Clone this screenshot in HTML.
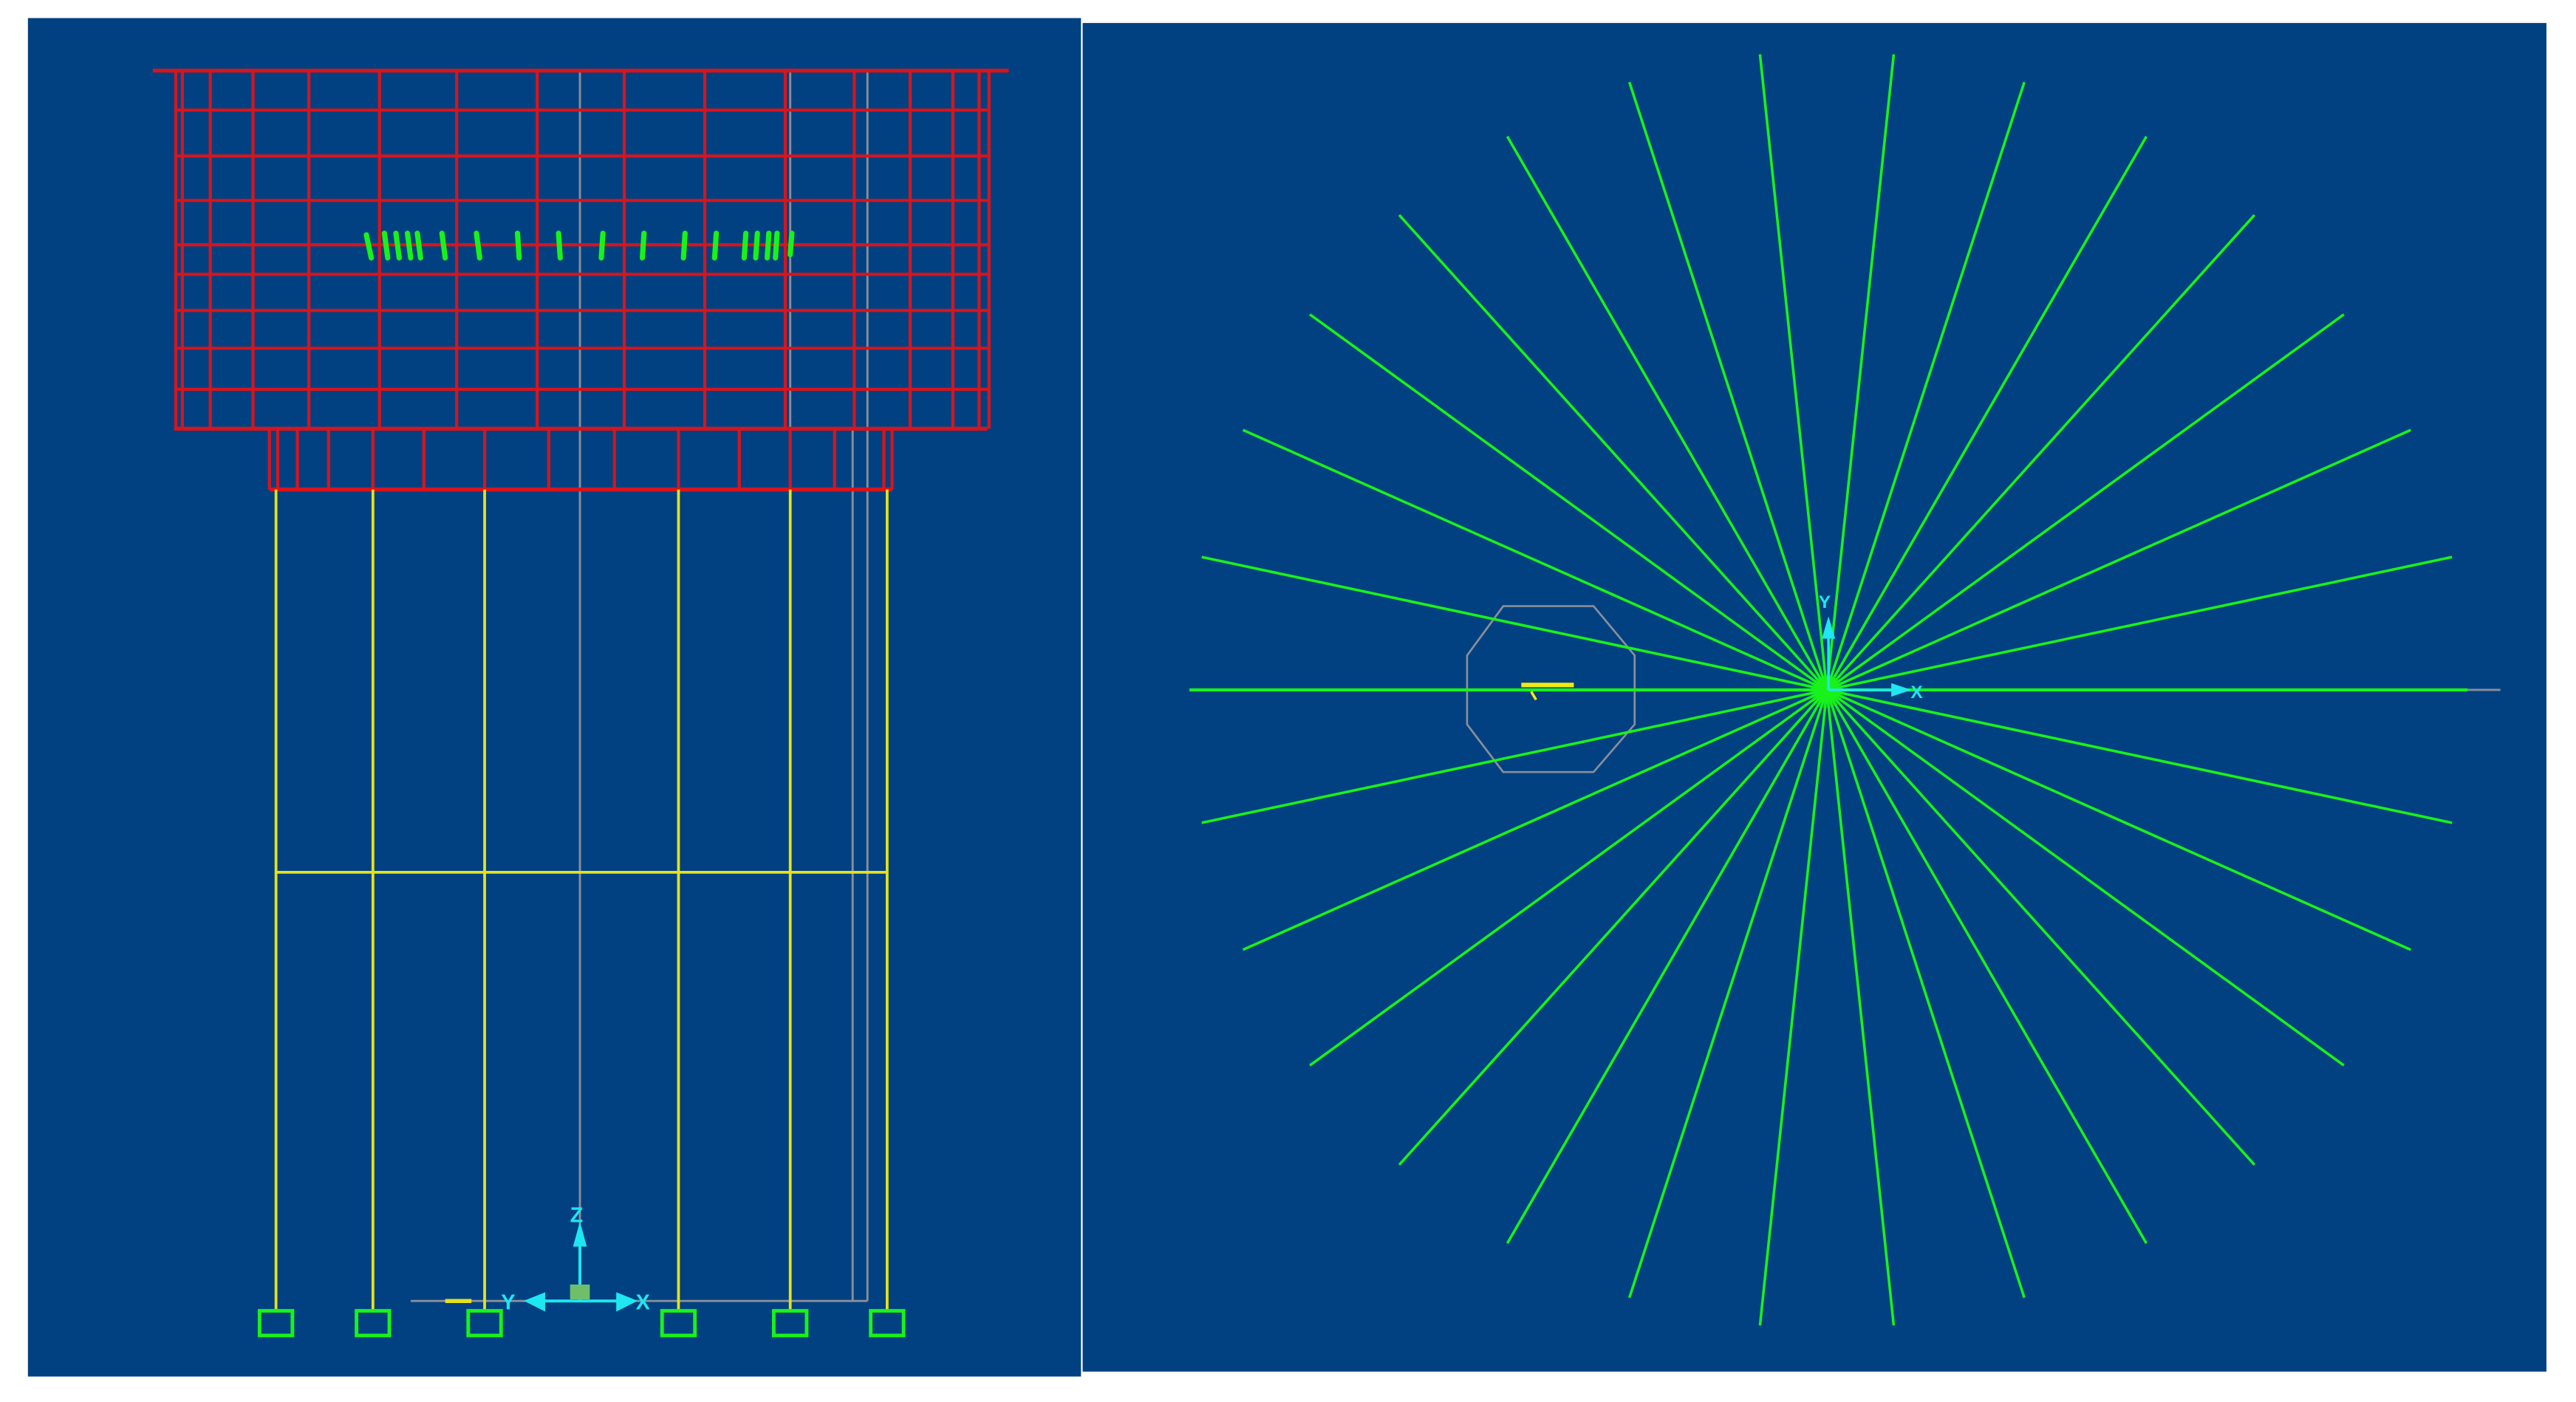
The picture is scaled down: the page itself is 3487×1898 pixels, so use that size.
<!DOCTYPE html>
<html><head><meta charset="utf-8"><style>
html,body{margin:0;padding:0;background:#fff;}
svg{display:block;}
</style></head><body>
<svg width="3487" height="1898" viewBox="0 0 1568 853.5" preserveAspectRatio="none" xmlns="http://www.w3.org/2000/svg">
<rect width="1568" height="853.5" fill="#fff"/>
<rect x="17" y="11" width="641" height="827" fill="#014181"/>
<rect x="659" y="14" width="891" height="821" fill="#014181"/>
<g stroke="#8a8f9a" stroke-width="1.3" fill="none">
<line x1="353" y1="43" x2="353" y2="792"/>
<line x1="481" y1="43" x2="481" y2="298"/>
<line x1="528" y1="43" x2="528" y2="792"/>
<line x1="519" y1="262" x2="519" y2="792"/>
<line x1="250" y1="792" x2="528" y2="792"/>
</g>
<g stroke="#d8141c" stroke-width="1.9" fill="none">
<line x1="93" y1="43" x2="614" y2="43" stroke-width="2.4"/>
<line x1="106" y1="67" x2="601" y2="67"/>
<line x1="106" y1="95" x2="601" y2="95"/>
<line x1="106" y1="122" x2="601" y2="122"/>
<line x1="106" y1="149" x2="601" y2="149"/>
<line x1="106" y1="167" x2="601" y2="167"/>
<line x1="106" y1="189" x2="601" y2="189"/>
<line x1="106" y1="212" x2="601" y2="212"/>
<line x1="106" y1="237" x2="601" y2="237"/>
<line x1="106" y1="261" x2="601" y2="261" stroke-width="2.4"/>
<path d="M107 43V261M111 43V261M128 43V261M154 43V261M188 43V261M231 43V261M278 43V261M327 43V261M380 43V261M429 43V261M478 43V261M520 43V261M554 43V261M580 43V261M596 43V261M602 43V261"/>
<line x1="164" y1="298" x2="543" y2="298" stroke-width="2.4"/>
<path d="M164 261V298M169 261V298M181 261V298M200 261V298M227 261V298M258 261V298M295 261V298M334 261V298M374 261V298M413 261V298M450 261V298M481 261V298M508 261V298M538 261V298M543 261V298"/>
</g>
<g stroke="#19f21a" stroke-width="3.2" stroke-linecap="round">
<path d="M223 143L226 157M234 142L236 157M241 142L243 157M248 142L250 157M254 142L256 157M269 142L271 157M290 142L292 157M315 142L316 157M340 142L341 157M367 142L366 157M392 142L391 157M417 142L416 157M436 142L435 157M454 142L453 157M461 142L460 157M468 142L467 157M473 142L472 157M482 142L481 155"/>
</g>
<g stroke="#e6e21a" stroke-width="1.7" fill="none">
<path d="M168 298V798M227 298V798M295 298V798M413 298V798M481 298V798M540 298V798"/>
<line x1="168" y1="531" x2="540" y2="531"/>
<line x1="271" y1="792" x2="287" y2="792" stroke-width="2.5"/>
</g>
<g stroke="#19f21a" stroke-width="2.2" fill="none">
<rect x="158" y="798" width="20" height="15"/>
<rect x="217" y="798" width="20" height="15"/>
<rect x="285" y="798" width="20" height="15"/>
<rect x="403" y="798" width="20" height="15"/>
<rect x="471" y="798" width="20" height="15"/>
<rect x="530" y="798" width="20" height="15"/>
</g>
<g stroke="#1fe6f0" stroke-width="1.8" fill="#1fe6f0">
<line x1="353" y1="792" x2="353" y2="748"/>
<path d="M350 758L353 747L356 758Z"/>
<line x1="322" y1="792" x2="385" y2="792"/>
<path d="M331 788L321 792L331 797Z"/>
<path d="M376 788L386 792L376 797Z"/>
</g>
<rect x="347" y="782" width="12" height="9" fill="#6fbf6a"/>
<g font-family="Liberation Sans, sans-serif" font-size="13" font-weight="bold" fill="#1fe6f0">
<text x="347" y="744">Z</text>
<text x="305" y="797">Y</text>
<text x="387" y="797">X</text>
</g>
<line x1="1112" y1="420" x2="1522" y2="420" stroke="#8a8f9a" stroke-width="1.3"/>
<polygon points="893,399 893,441 915,470 970,470 995,441 995,399 970,369 915,369" fill="none" stroke="#8a8f9a" stroke-width="1.2"/>
<g stroke="#19f21a" stroke-width="1.6">
<line x1="724" y1="420" x2="1502" y2="420" stroke-width="1.9"/>
<line x1="1112" y1="420" x2="1492.5" y2="339.1"/>
<line x1="1112" y1="420" x2="1467.4" y2="261.8"/>
<line x1="1112" y1="420" x2="1426.7" y2="191.4"/>
<line x1="1112" y1="420" x2="1372.3" y2="130.9"/>
<line x1="1112" y1="420" x2="1306.5" y2="83.1"/>
<line x1="1112" y1="420" x2="1232.2" y2="50.0"/>
<line x1="1112" y1="420" x2="1152.7" y2="33.1"/>
<line x1="1112" y1="420" x2="1071.3" y2="33.1"/>
<line x1="1112" y1="420" x2="991.8" y2="50.0"/>
<line x1="1112" y1="420" x2="917.5" y2="83.1"/>
<line x1="1112" y1="420" x2="851.7" y2="130.9"/>
<line x1="1112" y1="420" x2="797.3" y2="191.4"/>
<line x1="1112" y1="420" x2="756.6" y2="261.8"/>
<line x1="1112" y1="420" x2="731.5" y2="339.1"/>
<line x1="1112" y1="420" x2="1492.5" y2="500.9"/>
<line x1="1112" y1="420" x2="1467.4" y2="578.2"/>
<line x1="1112" y1="420" x2="1426.7" y2="648.6"/>
<line x1="1112" y1="420" x2="1372.3" y2="709.1"/>
<line x1="1112" y1="420" x2="1306.5" y2="756.9"/>
<line x1="1112" y1="420" x2="1232.2" y2="790.0"/>
<line x1="1112" y1="420" x2="1152.7" y2="806.9"/>
<line x1="1112" y1="420" x2="1071.3" y2="806.9"/>
<line x1="1112" y1="420" x2="991.8" y2="790.0"/>
<line x1="1112" y1="420" x2="917.5" y2="756.9"/>
<line x1="1112" y1="420" x2="851.7" y2="709.1"/>
<line x1="1112" y1="420" x2="797.3" y2="648.6"/>
<line x1="1112" y1="420" x2="756.6" y2="578.2"/>
<line x1="1112" y1="420" x2="731.5" y2="500.9"/>
</g>
<circle cx="1112" cy="421" r="10" fill="#19f21a" opacity="0.45"/>
<line x1="926" y1="417" x2="958" y2="417" stroke="#f0ea10" stroke-width="2.8"/>
<line x1="932" y1="421" x2="935" y2="426" stroke="#f0ea10" stroke-width="1.6"/>
<g stroke="#1fe6f0" stroke-width="1.6" fill="#1fe6f0">
<line x1="1113" y1="420" x2="1113" y2="380"/>
<path d="M1110 388L1113 378L1116 388Z"/>
<line x1="1113" y1="420" x2="1160" y2="420"/>
<path d="M1152 417L1161 420L1152 423Z"/>
</g>
<g font-family="Liberation Sans, sans-serif" font-size="11" font-weight="bold" fill="#1fe6f0">
<text x="1107" y="370">Y</text>
<text x="1163" y="425">X</text>
</g>
</svg>
</body></html>
